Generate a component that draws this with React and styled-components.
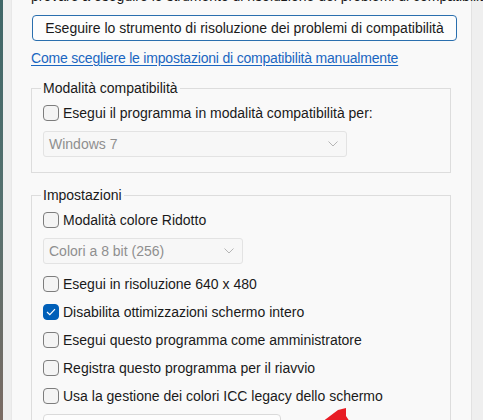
import React from 'react';
import styled, { createGlobalStyle } from 'styled-components';

const GlobalStyle = createGlobalStyle`
  html, body {
    margin: 0;
    padding: 0;
    background: #efefef;
    overflow: hidden;
  }
  body {
    font-family: 'Liberation Sans', Arial, sans-serif;
  }
`;

const Screen = styled.div`
  position: relative;
  width: 483px;
  height: 420px;
  display: flex;
  overflow: hidden;
  background: #efefef;
`;

const DesktopEdge = styled.div`
  width: 3px;
  flex-shrink: 0;
  background: linear-gradient(#3f6667, #55706e 50%, #7a6a62);
`;

const Frame = styled.div`
  width: 8px;
  flex-shrink: 0;
  background: #eeeeee;
`;

const Panel = styled.div`
  width: 461px;
  flex-shrink: 0;
  background: #f9f9f9;
  border-left: 1px solid #e8e8e8;
  border-right: 1px solid #e2e2e2;
  box-sizing: border-box;
  padding: 0 0 0 19px;
`;

const Content = styled.div`
  margin-top: -14px;
  display: flex;
  flex-direction: column;
  width: 420px;
`;

const Intro = styled.div`
  font-size: 14px;
  color: #1a1a1a;
  white-space: nowrap;
  height: 20px;
  line-height: 20px;
`;

const WideButton = styled.button`
  margin-top: 9px;
  height: 26px;
  width: 425px;
  margin-left: 1px;
  font-family: inherit;
  font-size: 14px;
  color: #1a1a1a;
  background: #fdfdfd;
  border: 1px solid #2a6fae;
  border-radius: 4px;
  padding: 0;
  white-space: nowrap;
`;

const HelpLink = styled.a`
  margin-top: 7px;
  font-size: 14px;
  line-height: 20px;
  color: #1a66c1;
  text-decoration: underline;
  text-underline-offset: 2px;
  letter-spacing: -0.2px;
  white-space: nowrap;
`;

const Group = styled.fieldset`
  margin: ${(p) => p.$top}px 0 0 0;
  padding: 0 0 ${(p) => p.$bottom}px 11px;
  border: 1px solid #dddddd;
  border-radius: 0;
  width: 420px;
  box-sizing: border-box;
  display: flex;
  flex-direction: column;
`;

const Legend = styled.legend`
  font-size: 14px;
  color: #1a1a1a;
  padding: 0 2px;
  margin-left: -2px;
  margin-bottom: 2px;
  line-height: 18px;
`;

const CheckRow = styled.label`
  display: flex;
  align-items: center;
  height: 28px;
  font-size: 14px;
  color: #1a1a1a;
  white-space: nowrap;
`;

const Box = styled.span`
  width: 16px;
  height: 16px;
  box-sizing: border-box;
  border-radius: 4px;
  margin-right: 4px;
  display: flex;
  align-items: center;
  justify-content: center;
  flex-shrink: 0;
  border: 1px solid ${(p) => (p.$checked ? '#005fb8' : '#7d7d7d')};
  background: ${(p) => (p.$checked ? '#005fb8' : '#f4f4f4')};
`;

const Select = styled.div`
  height: 26px;
  width: ${(p) => p.$width}px;
  box-sizing: border-box;
  border: 1px solid #e3e3e3;
  border-radius: 3px;
  background: #f7f7f7;
  display: flex;
  align-items: center;
  justify-content: space-between;
  padding: 0 8px 0 5px;
  font-size: 14px;
  color: #8f8f8f;
  margin: 4px 0 6px;
`;

const Chevron = () => (
  <svg width="10" height="6" viewBox="0 0 10 6">
    <path d="M0.5 0.5 L5 5 L9.5 0.5" fill="none" stroke="#b5b5b5" strokeWidth="1" />
  </svg>
);

const Check = ({ checked, children }) => (
  <CheckRow>
    <Box $checked={checked}>
      {checked && (
        <svg width="10" height="8" viewBox="0 0 10 8">
          <path d="M1 4 L3.8 6.6 L9 1.2" fill="none" stroke="#fff" strokeWidth="1.2" />
        </svg>
      )}
    </Box>
    {children}
  </CheckRow>
);

const NextField = styled.div`
  margin-top: 4px;
  height: 26px;
  width: 238px;
  box-sizing: border-box;
  border: 1px solid #dadada;
  border-radius: 4px;
  background: #fdfdfd;
`;

const Arrow = styled.svg`
  position: absolute;
  left: 316px;
  top: 402px;
`;

export default function App() {
  return (
    <>
      <GlobalStyle />
      <Screen>
        <DesktopEdge />
        <Frame />
        <Panel>
          <Content>
            <Intro>provare a eseguire lo strumento di risoluzione dei problemi di compatibilità</Intro>
            <WideButton>Eseguire lo strumento di risoluzione dei problemi di compatibilità</WideButton>
            <HelpLink href="#">Come scegliere le impostazioni di compatibilità manualmente</HelpLink>
            <Group $top={11} $bottom={9}>
              <Legend>Modalità compatibilità</Legend>
              <Check>Esegui il programma in modalità compatibilità per:</Check>
              <Select $width={304}>
                <span>Windows 7</span>
                <Chevron />
              </Select>
            </Group>
            <Group $top={13} $bottom={0}>
              <Legend>Impostazioni</Legend>
              <Check>Modalità colore Ridotto</Check>
              <Select $width={200}>
                <span>Colori a 8 bit (256)</span>
                <Chevron />
              </Select>
              <Check>Esegui in risoluzione 640 x 480</Check>
              <Check checked>Disabilita ottimizzazioni schermo intero</Check>
              <Check>Esegui questo programma come amministratore</Check>
              <Check>Registra questo programma per il riavvio</Check>
              <Check>Usa la gestione dei colori ICC legacy dello schermo</Check>
              <NextField />
            </Group>
          </Content>
        </Panel>
        <Arrow width="40" height="20" viewBox="0 0 40 20">
          <polygon points="6,20 22,8 30,6 30,14 34,20" fill="#e81c24" />
        </Arrow>
      </Screen>
    </>
  );
}
